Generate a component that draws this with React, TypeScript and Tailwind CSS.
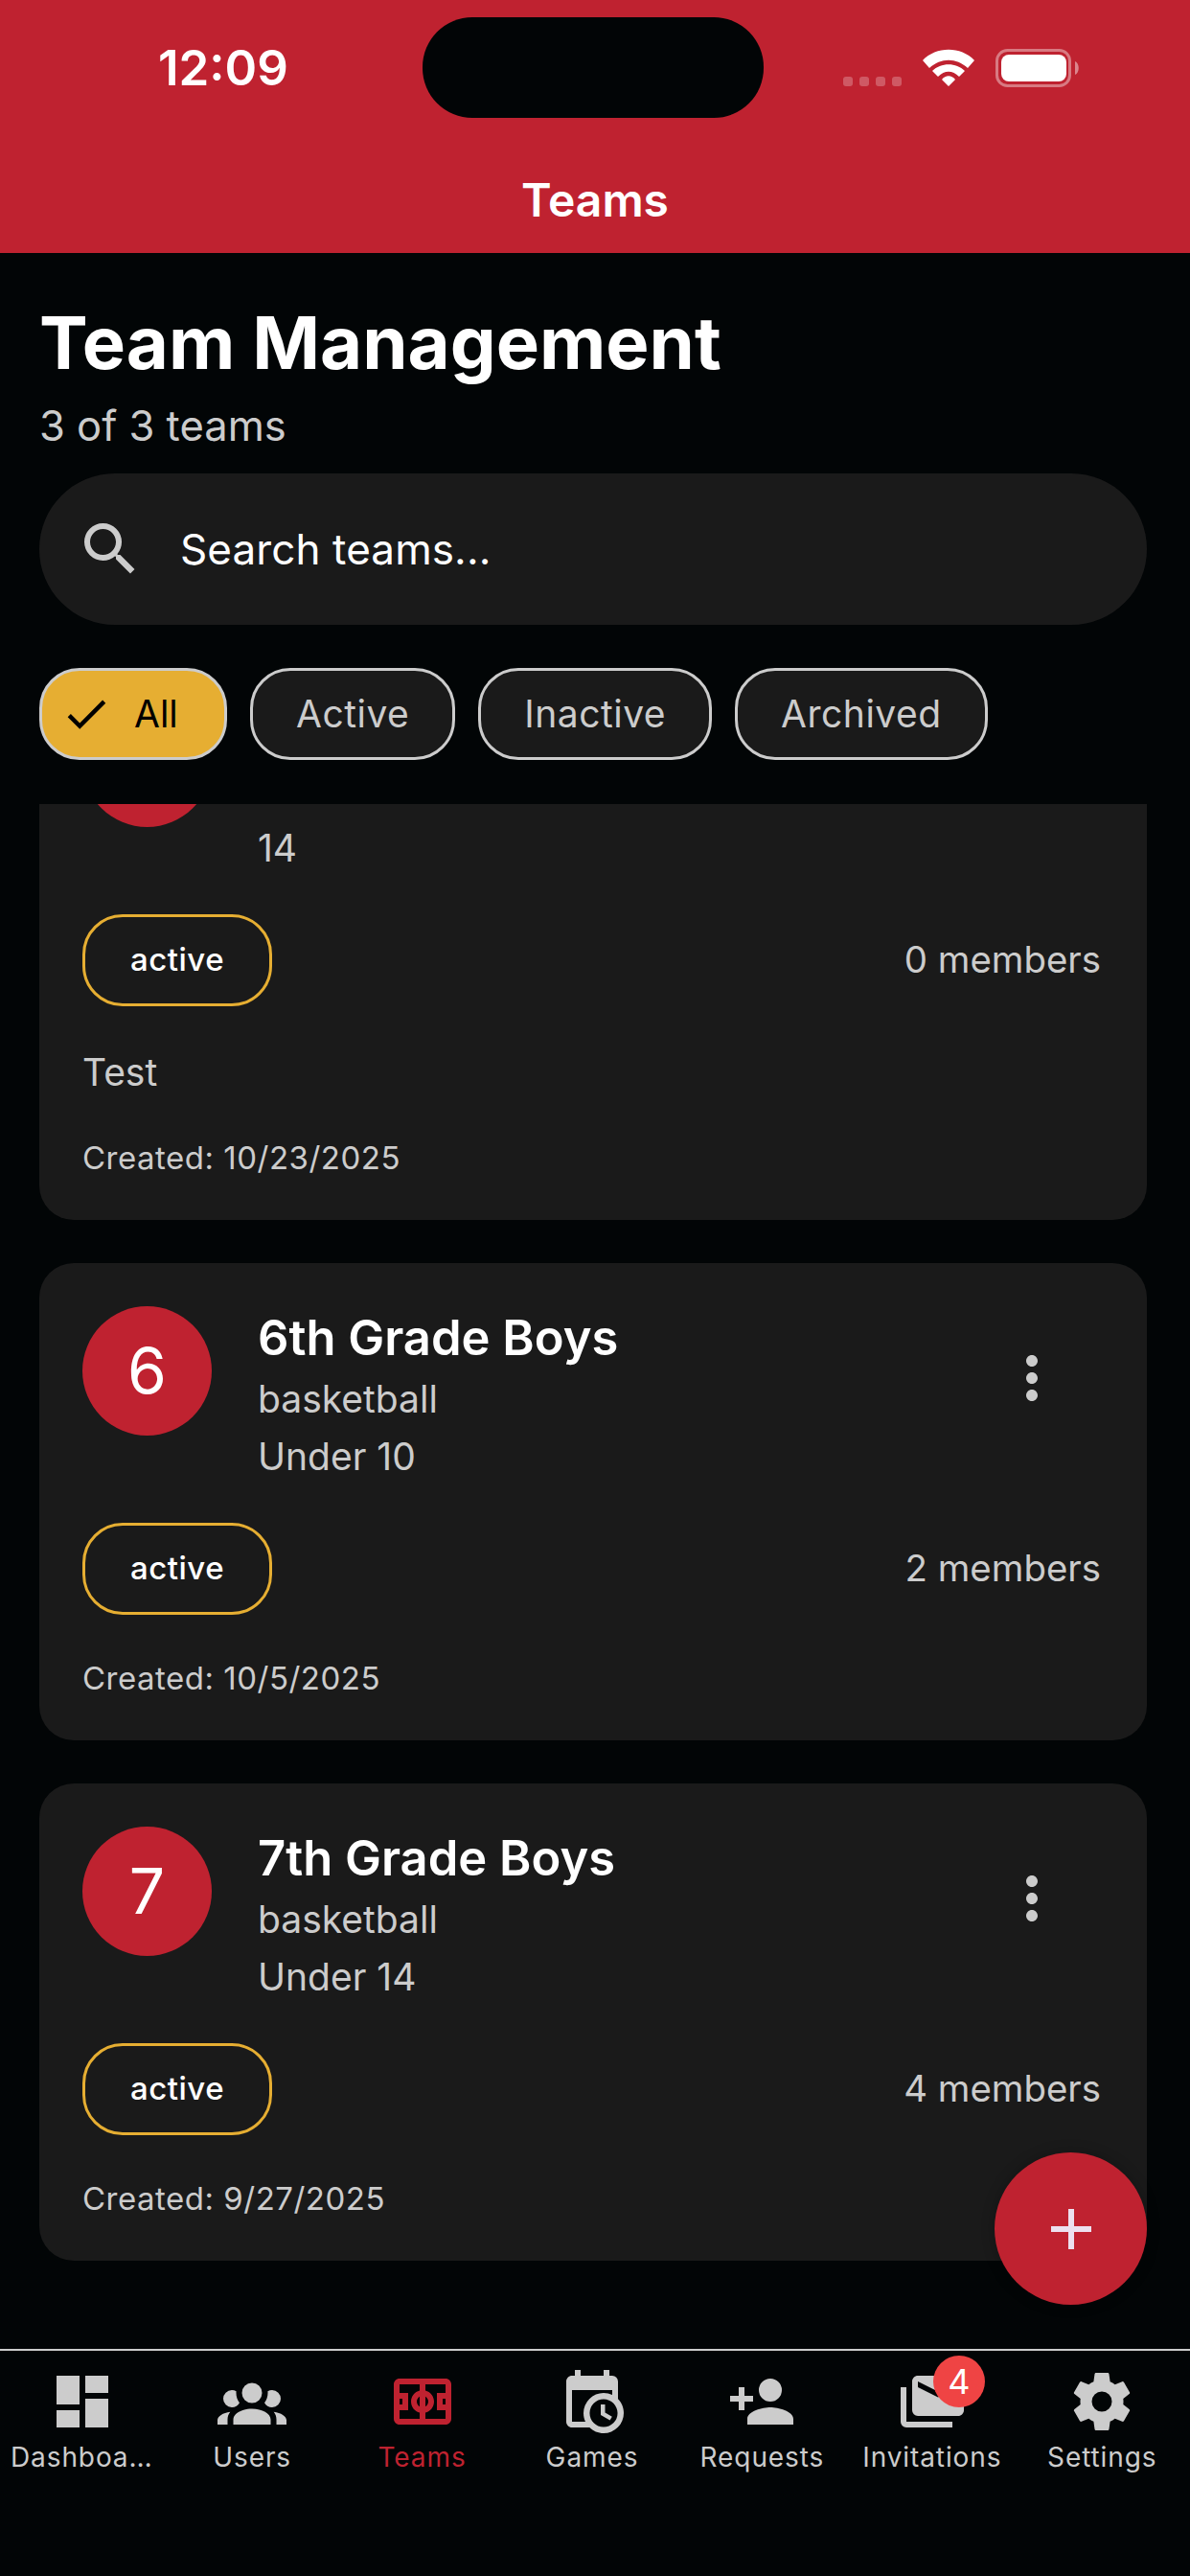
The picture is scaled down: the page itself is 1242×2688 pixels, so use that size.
import { MdDashboard, MdMoreVert, MdAdd, MdSearch, MdCheck } from "react-icons/md";
import type { ReactNode } from "react";

function Glyph({ d }: { d: string }) {
  return (
    <svg width={72} height={72} viewBox="0 0 24 24" fill="currentColor">
      <path d={d} />
    </svg>
  );
}
const FIELD = "M4 4C2.89 4 2 4.89 2 6V18C2 19.11 2.9 20 4 20H20C21.11 20 22 19.11 22 18V6C22 4.89 21.11 4 20 4H4M4 6H11V8.13C9.27 8.57 8 10.14 8 12C8 13.86 9.27 15.43 11 15.87V18H4V15H7V9H4V6M13 6H20V9H17V15H20V18H13V15.87C14.73 15.43 16 13.86 16 12C16 10.14 14.73 8.57 13 8.13V6M4 11H5V13H4V11M19 11H20V13H19V11M11 10.27V13.73C10.4 13.39 10 12.74 10 12C10 11.26 10.4 10.61 11 10.27M13 10.27C13.6 10.61 14 11.26 14 12C14 12.74 13.6 13.39 13 13.73V10.27Z";
const CAL = "M15,13H16.5V15.82L18.94,17.23L18.19,18.53L15,16.69V13M19,8H5V19H9.67C9.24,18.09 9,17.07 9,16A7,7 0 0,1 16,9C17.07,9 18.09,9.24 19,9.67V8M5,21C3.89,21 3,20.1 3,19V5C3,3.89 3.89,3 5,3H6V1H8V3H16V1H18V3H19A2,2 0 0,1 21,5V11.1C22.24,12.36 23,14.09 23,16A7,7 0 0,1 16,23C14.09,23 12.36,22.24 11.1,21H5M16,11.15A4.85,4.85 0 0,0 11.15,16C11.15,18.68 13.32,20.85 16,20.85A4.85,4.85 0 0,0 20.85,16C20.85,13.32 18.68,11.15 16,11.15Z";
const MAILS = "M21,3H7C5.89,3 5,3.89 5,5V15A2,2 0 0,0 7,17H21C22.11,17 23,16.11 23,15V5C23,3.89 22.11,3 21,3M21,7L14,10.5L7,7V5L14,8.5L21,5V7M3,19H19V21H3A2,2 0 0,1 1,19V7H3V19Z";
const GROUP = "M12,5.5A3.5,3.5 0 0,1 15.5,9A3.5,3.5 0 0,1 12,12.5A3.5,3.5 0 0,1 8.5,9A3.5,3.5 0 0,1 12,5.5M5,8C5.56,8 6.08,8.15 6.53,8.42C6.38,9.85 6.8,11.27 7.66,12.38C7.16,13.34 6.16,14 5,14A3,3 0 0,1 2,11A3,3 0 0,1 5,8M19,8A3,3 0 0,1 22,11A3,3 0 0,1 19,14C17.84,14 16.84,13.34 16.34,12.38C17.2,11.27 17.62,9.85 17.47,8.42C17.92,8.15 18.44,8 19,8M5.5,18.25C5.5,16.18 8.41,14.5 12,14.5C15.59,14.5 18.5,16.18 18.5,18.25V20H5.5V18.25M0,20V18.5C0,17.11 1.89,15.94 4.45,15.6C3.86,16.28 3.5,17.22 3.5,18.25V20H0M24,20V18.5C24,17.11 22.11,15.94 19.55,15.6C20.14,16.28 20.5,17.22 20.5,18.25V20H24Z";
const PLUS = "M15,14C12.33,14 7,15.33 7,18V20H23V18C23,15.33 17.67,14 15,14M6,10V7H4V10H1V12H4V15H6V12H9V10M15,12A4,4 0 0,0 19,8A4,4 0 0,0 15,4A4,4 0 0,0 11,8A4,4 0 0,0 15,12Z";
const COG = "M12,15.5A3.5,3.5 0 0,1 8.5,12A3.5,3.5 0 0,1 12,8.5A3.5,3.5 0 0,1 15.5,12A3.5,3.5 0 0,1 12,15.5M19.43,12.97C19.47,12.65 19.5,12.33 19.5,12C19.5,11.67 19.47,11.34 19.43,11L21.54,9.37C21.73,9.22 21.78,8.95 21.66,8.73L19.66,5.27C19.54,5.05 19.27,4.96 19.05,5.05L16.56,6.05C16.04,5.66 15.5,5.32 14.87,5.07L14.5,2.42C14.46,2.18 14.25,2 14,2H10C9.75,2 9.54,2.18 9.5,2.42L9.13,5.07C8.5,5.32 7.96,5.66 7.44,6.05L4.95,5.05C4.73,4.96 4.46,5.05 4.34,5.27L2.34,8.73C2.21,8.95 2.27,9.22 2.46,9.37L4.57,11C4.53,11.34 4.5,11.67 4.5,12C4.5,12.33 4.53,12.65 4.57,12.97L2.46,14.63C2.27,14.78 2.21,15.05 2.34,15.27L4.34,18.73C4.46,18.95 4.73,19.03 4.95,18.95L7.44,17.94C7.96,18.34 8.5,18.68 9.13,18.93L9.5,21.58C9.54,21.82 9.75,22 10,22H14C14.25,22 14.46,21.82 14.5,21.58L14.87,18.93C15.5,18.67 16.04,18.34 16.56,17.94L19.05,18.95C19.27,19.03 19.54,18.95 19.66,18.73L21.66,15.27C21.78,15.05 21.73,14.78 21.54,14.63L19.43,12.97Z";

function Chip({ label }: { label: string }) {
  return (
    <div className="h-[96px] px-[45px] flex items-center rounded-[42px] border-[3px] border-[#cccccc] bg-[#1a1a1a] text-[39px] text-[#cccccc] tracking-[0.5px]">
      {label}
    </div>
  );
}

function Card({ initial, name, sport, age, members, desc, created }: { initial: string; name: string; sport: string; age: string; members: string; desc?: string; created: string }) {
  return (
    <div className="rounded-[36px] bg-[#1a1a1a] pt-[45px] px-[45px] pb-[41px] flex flex-col">
      <div className="flex items-start">
        <div className="w-[135px] h-[135px] rounded-full flex items-center justify-center text-[66px] text-white shrink-0 bg-[#bf2230]">
          {initial}
        </div>
        <div className="ml-[48px] -mt-[1px] flex-1 flex flex-col">
          <div className="text-[50.7px] leading-[68px] font-semibold text-white">{name}</div>
          <div className="text-[39px] leading-[60px] text-[#cccccc]">{sport}</div>
          <div className="text-[39px] leading-[60px] text-[#cccccc]">{age}</div>
        </div>
        <div className="w-[72px] h-[72px] mt-[39px] mr-[39px] text-[#cccccc]">
          <MdMoreVert size={72} />
        </div>
      </div>
      <div className="mt-[39px] flex items-center justify-between">
        <div className="h-[96px] w-[198px] rounded-[42px] border-[3px] border-[#e6ae32] flex items-center justify-center text-[33px] font-medium text-white tracking-[0.5px]">
          active
        </div>
        <div className="pr-[3px] text-[38.4px] text-[#cccccc]">{members}</div>
      </div>
      {desc && <div className="mt-[39px] text-[39px] leading-[60px] text-[#cccccc]">{desc}</div>}
      <div className={`${desc ? "mt-[35px]" : "mt-[42px]"} text-[33px] leading-[48px] text-[#cccccc] tracking-[0.5px]`}>{created}</div>
    </div>
  );
}

function Tab({ label, icon, active }: { label: string; icon: ReactNode; active?: boolean }) {
  return (
    <div className={`flex flex-col items-center min-w-0 ${active ? "text-[#bf2230]" : "text-[#cccccc]"}`}>
      <div className="relative w-[72px] h-[72px]">{icon}</div>
      <div className="mt-[1px] w-full px-[14px] text-center truncate text-[28px] leading-[42px] tracking-[0.9px]">{label}</div>
    </div>
  );
}

export default function App() {
  return (
    <div className="relative w-[1242px] h-[2688px] overflow-hidden flex flex-col bg-[#020506] font-['Inter',sans-serif]">
      <header className="h-[264px] shrink-0 bg-[#bf2230] relative flex flex-col">
        <div className="h-[141px] relative flex items-center">
          <span className="ml-[165px] mt-[2px] text-[51px] font-semibold text-white">12:09</span>
          <div className="absolute left-[441px] top-[18px] w-[356px] h-[105px] rounded-[52px] bg-[#020506]" />
          <div className="absolute left-[880px] top-[50px] w-[260px] h-[44px]">
            <svg width="260" height="44" viewBox="0 0 260 44" fill="none">
              <g fill="#ffffff" fillOpacity="0.25">
                <rect x="0" y="30" width="10" height="10" rx="3" />
                <rect x="17" y="30" width="10" height="10" rx="3" />
                <rect x="34" y="30" width="10" height="10" rx="3" />
                <rect x="51" y="30" width="10" height="10" rx="3" />
              </g>
              <path d="M83 13 C97 -2 123 -2 137 13 L130 21 C118 10 102 10 90 21 Z M93 24 C102 15 118 15 127 24 L121 30 C114 23 106 23 99 30 Z M103 33 C107 28 113 28 117 33 L110 40 Z" fill="#ffffff" />
              <rect x="160.5" y="2.5" width="76" height="37" rx="11" stroke="#ffffff" strokeOpacity="0.4" strokeWidth="3" />
              <rect x="165" y="7" width="68" height="28" rx="8" fill="#ffffff" />
              <path d="M242 14 C247 16 247 26 242 28 Z" fill="#ffffff" fillOpacity="0.45" />
            </svg>
          </div>
        </div>
        <div className="flex-1 flex items-start justify-center">
          <span className="mt-[36px] text-[48px] leading-[64px] font-semibold text-white">Teams</span>
        </div>
      </header>

      <div className="pl-[41px] pr-[45px] pt-[50px] shrink-0">
        <h1 className="text-[76px] leading-[86px] font-bold text-white">Team Management</h1>
        <div className="mt-[14px] text-[43.5px] leading-[60px] text-[#cccccc]">3 of 3 teams</div>
      </div>

      <div className="ml-[41px] mr-[45px] mt-[20px] h-[158px] shrink-0 rounded-[79px] bg-[#1a1a1a] flex items-center pl-[38px]">
        <MdSearch size={72} className="text-[#cccccc]" />
        <span className="ml-[37px] text-[44px] text-white tracking-[0.1px]">Search teams...</span>
      </div>

      <div className="ml-[41px] mt-[45px] flex gap-[24px] shrink-0">
        <div className="h-[96px] w-[196px] pl-[19px] flex items-center rounded-[42px] border-[3px] border-[#cccccc] bg-[#e6ae32] text-[39px] text-black">
          <MdCheck size={54} />
          <span className="ml-[23px]">All</span>
        </div>
        <Chip label="Active" />
        <Chip label="Inactive" />
        <Chip label="Archived" />
      </div>

      <main className="mt-[46px] flex-1 min-h-0 overflow-hidden pl-[41px] pr-[45px]">
        <div className="-mt-[156px] flex flex-col gap-[45px]">
          <Card initial="T" name="Test Team" sport="basketball" age="14" members="0 members" desc="Test" created="Created: 10/23/2025" />
          <Card initial="6" name="6th Grade Boys" sport="basketball" age="Under 10" members="2 members" created="Created: 10/5/2025" />
          <Card initial="7" name="7th Grade Boys" sport="basketball" age="Under 14" members="4 members" created="Created: 9/27/2025" />
        </div>
      </main>

      <nav className="h-[237px] shrink-0 border-t-[2px] border-[#cccccc] bg-[#020506] pt-[17px]">
        <div className="grid grid-cols-7 -ml-[3px] w-[1242px]">
          <Tab label="Dashboard" icon={<MdDashboard size={72} />} />
          <Tab label="Users" icon={<Glyph d={GROUP} />} />
          <Tab label="Teams" active icon={<Glyph d={FIELD} />} />
          <Tab label="Games" icon={<Glyph d={CAL} />} />
          <Tab label="Requests" icon={<Glyph d={PLUS} />} />
          <Tab
            label="Invitations"
            icon={
              <>
                <Glyph d={MAILS} />
                <div className="absolute left-[37px] -top-[12px] w-[54px] h-[54px] rounded-full bg-[#ef4444] flex items-center justify-center text-[36px] text-white">
                  4
                </div>
              </>
            }
          />
          <Tab label="Settings" icon={<Glyph d={COG} />} />
        </div>
      </nav>

      <div className="absolute left-[1038px] top-[2246px] w-[159px] h-[159px] rounded-full bg-[#bf2230] shadow-[0_0_14px_rgba(0,0,0,0.25)] flex items-center justify-center text-[#ece0ef]">
        <MdAdd size={72} />
      </div>
    </div>
  );
}
